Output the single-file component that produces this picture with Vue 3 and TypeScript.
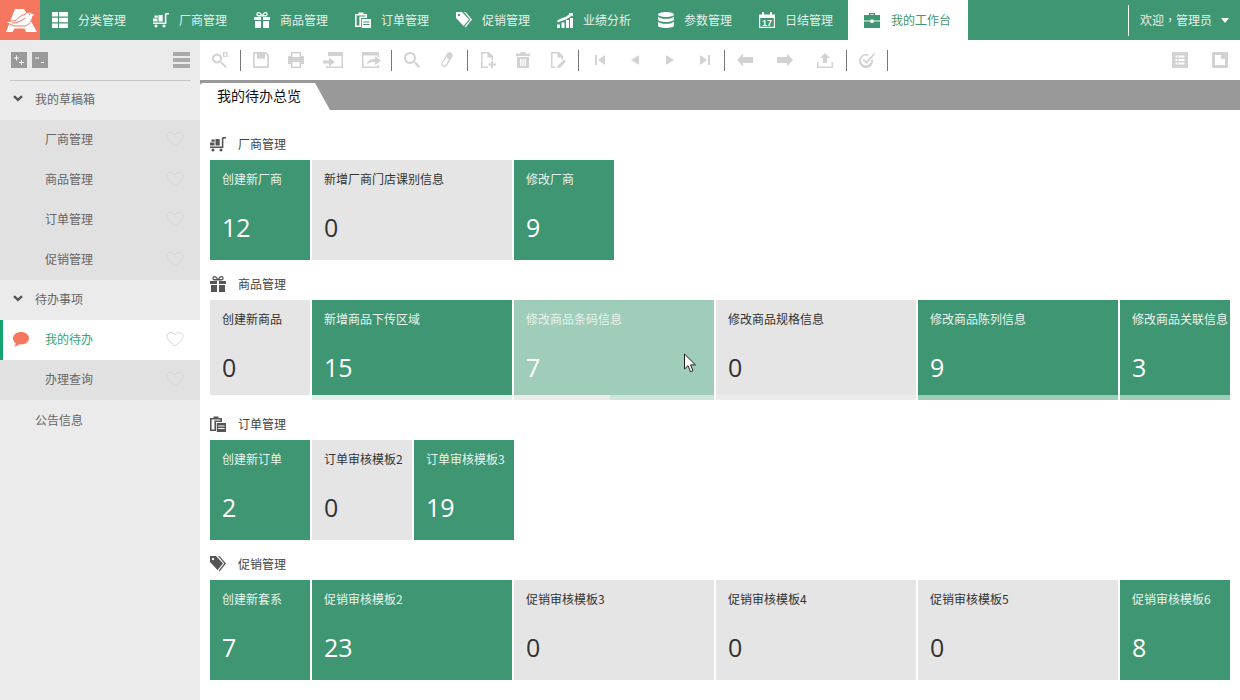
<template>
  <div class="page">
    <header class="topbar">
      <div class="logo">
        <svg width="40" height="40" viewBox="0 0 40 40">
          <path class="logo-a" d="M15 9h9l3 5 10 18H26l-1.500-3.500h-10L12.500 32H6z" />
          <path class="logo-bird" d="M5 22l11-1.500c2-2.500 5-5.500 9-6 1-2.500 5-3 7-1l4 1.500-3.500 1.500c-.5 4.500-3.500 8.500-7.500 9.500H14l-3-1.500z" />
          <circle class="logo-eye" cx="29.500" cy="14.500" r=".7" />
          <path class="logo-wing" d="M12 23c5 0 10-2 13-5" />
        </svg>
      </div>
      <nav class="nav">
        <a v-for="item in navItems" :key="item.label" class="nav-item">
          <svg class="nav-icon" viewBox="0 0 16 16"><path :d="icons[item.icon]" fill-rule="evenodd" />
            <text v-if="item.icon === 'calendar'" x="8" y="13.600" text-anchor="middle" class="cal-text">17</text>
          </svg>
          <span class="lift">{{ item.label }}</span>
        </a>
        <a class="nav-item active">
          <svg class="nav-icon" viewBox="0 0 16 16"><path :d="icons.briefcase" fill-rule="evenodd" /></svg>
          <span class="lift">我的工作台</span>
        </a>
      </nav>
      <div class="user">
        <span class="lift">欢迎<span class="comma">，</span>管理员</span>
        <i class="caret"></i>
      </div>
    </header>

    <div class="main">
      <aside class="sidebar">
        <div class="side-tools">
          <span class="square">
            <svg width="16" height="16" viewBox="0 0 16 16"><path d="M3 6h5M5.500 3.500v5M8 10.500h5M10.500 8v5" /></svg>
          </span>
          <span class="square">
            <svg width="16" height="16" viewBox="0 0 16 16"><path d="M3 6h4M9 10.500h3" /></svg>
          </span>
          <span class="bars"><i></i><i></i><i></i></span>
        </div>
        <div class="side-group first">
          <svg class="chevron" width="10" height="7" viewBox="0 0 10 7"><path d="M1 1.200l4 3.600 4-3.600" /></svg>
          我的草稿箱
        </div>
        <div v-for="name in draftItems" :key="name" class="side-sub">
          <span>{{ name }}</span>
          <svg class="heart" width="18" height="16" viewBox="0 0 18 16"><path :d="heartPath" /></svg>
        </div>
        <div class="side-group">
          <svg class="chevron" width="10" height="7" viewBox="0 0 10 7"><path d="M1 1.200l4 3.600 4-3.600" /></svg>
          待办事项
        </div>
        <div class="side-sub current">
          <svg class="bubble" width="16" height="16" viewBox="0 0 16 16">
            <path d="M8 1c4.400 0 8 2.600 8 6.300s-3.600 6.200-8 6.200c-.7 0-1.400 0-2-.2C4.500 15 2.500 15.300 .8 15.400c1-.7 1.700-1.700 1.900-3.200C1 11 0 9.300 0 7.300 0 3.600 3.600 1 8 1z" />
          </svg>
          <span>我的待办</span>
          <svg class="heart" width="18" height="16" viewBox="0 0 18 16"><path :d="heartPath" /></svg>
        </div>
        <div class="side-sub">
          <span>办理查询</span>
          <svg class="heart" width="18" height="16" viewBox="0 0 18 16"><path :d="heartPath" /></svg>
        </div>
        <div class="side-group plain">公告信息</div>
      </aside>

      <section class="content">
        <div class="toolbar">
          <template v-for="(group, i) in toolGroups" :key="i">
            <div class="tool-group" :class="group.cls">
              <svg v-for="t in group.tools" :key="t" :width="t === 'import' || t === 'export' ? 20 : 16" height="16"
                :viewBox="t === 'import' || t === 'export' ? '0 0 20 16' : '0 0 16 16'">
                <path :d="tools[t]" fill-rule="evenodd" />
              </svg>
            </div>
            <span class="sep"></span>
          </template>
          <div class="tool-group wide right">
            <svg width="16" height="16" viewBox="0 0 16 16"><path :d="tools.listBox" fill-rule="evenodd" /></svg>
            <svg width="16" height="16" viewBox="0 0 16 16"><path :d="tools.docBox" fill-rule="evenodd" /></svg>
          </div>
        </div>

        <div class="tabstrip">
          <div class="tab">我的待办总览</div>
        </div>

        <div class="board">
          <div v-for="sec in sections" :key="sec.title" class="section">
            <h4 class="sec-title">
              <svg width="16" height="16" viewBox="0 0 16 16"><path :d="icons[sec.icon]" fill-rule="evenodd" /></svg>
              <span class="lift">{{ sec.title }}</span>
            </h4>
            <div class="cards">
              <div v-for="card in sec.cards" :key="card.title" class="card" :style="{ width: card.w + 'px' }">
                <div class="card-body" :class="card.tone">
                  <div class="card-title">{{ card.title }}</div>
                  <div class="card-num">{{ card.num }}</div>
                  <svg v-if="card.cursor" class="cursor" width="14" height="22" viewBox="0 0 14 22">
                    <path d="M1.500 1v15l3.500-3.300 2.500 6 2.500-1-2.500-5.800h5z" />
                  </svg>
                </div>
                <div v-if="card.strip" class="strip" :style="{ background: card.strip }">
                  <div class="strip-fill" :style="{ width: (card.fillW || 0) + '%', background: card.fill }"></div>
                </div>
                <div v-else-if="sec.striped" class="strip none"></div>
              </div>
            </div>
          </div>
        </div>
      </section>
    </div>
  </div>
</template>

<script setup lang="ts">
interface Card {
  title: string
  num: number
  w: number
  tone: 'green' | 'gray' | 'faded'
  strip?: string
  fill?: string
  fillW?: number
  cursor?: boolean
}

interface Section {
  title: string
  icon: string
  striped?: boolean
  cards: Card[]
}

const icons: Record<string, string> = {
  grid: 'M0 0h6v4.500H0zM7 0h9v4.500H7zM0 5.750h6v4.500H0zM7 5.750h9v4.500H7zM0 11.500h6V16H0zM7 11.500h9V16H7z',
  cart: 'M0 6.500h4.500v3H0zM1.500 3.500h3.200v2.200H1.500zM5.500 3h4.200v6.500H5.500zM0 10.500h11.800V3c0-1.400.8-2 2-2H16v1.500h-1.400c-.8 0-1.200.3-1.200 1.100V12H0zM3 12.600a1.500 1.500 0 1 1-.01 0zM11 12.600a1.500 1.500 0 1 1-.01 0z',
  gift: 'M0 5h7v3H0zM9 5h7v3H9zM1 9h6v7H1zM9 9h6v7H9zM4.500 0a2.200 2.200 0 0 0 0 4.400h7a2.200 2.200 0 0 0 0-4.400C10 0 8.900 1 8 3 7.100 1 6 0 4.500 0zM4.500 1.300a.9.9 0 0 0 0 1.800h2C6 2 5.300 1.300 4.500 1.300zM11.500 1.300a.9.9 0 0 1 0 1.800h-2c.5-1.100 1.200-1.800 2-1.800z',
  clipboard: 'M0 2h3.500V.5h5V2H12v4H6v9H0zM1.600 3.600v9.800H4.400V4.400H10.400V3.600zM6.800 7H16v9H6.800zM8.200 9.600v1h6.400v-1zM8.200 12v1h6.400v-1z',
  tags: 'M0 0h6l7 7.500-5.500 6.500L0 6zM3 1.800a1.200 1.200 0 1 0 .01 0zM8 0h1.500L16 7.500 9.500 15.500l-.8-.9 5.600-7z',
  chart: 'M0 12.500h3V16H0zM4.500 10.500h3V16h-3zM9 8h3v8H9zM13 6h3v10h-3zM0 9c3-3 7-3 10-5l2.500-2-.8-1H16v3.500l-1-1-3.500 2.500C8.500 8.500 4 8.500 1 10.500z',
  database: 'M0 2.500C0 1 3.500 0 8 0s8 1 8 2.500S12.500 5 8 5 0 4 0 2.500zM0 4.500c1 1.400 4 2.300 8 2.300s7-.9 8-2.300v3C16 9 12.500 10 8 10S0 9 0 7.500zM0 9.500c1 1.400 4 2.300 8 2.300s7-.9 8-2.300v4C16 15 12.500 16 8 16s-8-1-8-2.500z',
  calendar: 'M0 2.500h3V0h2v2.500h6V0h2v2.500h3V16H0zM1.200 6v8.800h13.600V6z',
  briefcase: 'M5 3V1h6v2h5v5.500H9.500v-1h-3v1H0V3zM6.300 2.200V3h3.400v-.8zM0 9.500h6.500V11h3V9.500H16V16H0z',
}

const tools: Record<string, string> = {
  keySearch: 'M5 1.500a5 5 0 1 0 .01 0zM5 3.500a3 3 0 1 1-.01 0zM8.900 9.300L15 14.500 13.500 16 7.800 10.500zM11 0h4.500v5H11zM12.200 1.200v2.600h2.100V1.200z',
  save: 'M1 0h12l3 3v12a1 1 0 0 1-1 1H1a1 1 0 0 1-1-1V1a1 1 0 0 1 1-1zM1.700 1.700v12.600h12.600V3.700l-2-2h-.3v5H4v-5z',
  print: 'M3 0h10v4h2a1 1 0 0 1 1 1v7h-3v4H3v-4H0V5a1 1 0 0 1 1-1h2zM4.500 1.500V5h7V1.500zM4.500 10v4.500h7V10z',
  import: 'M5 0h15v16H3v-2h1.500v.5h14V4H5zM0 8.500h6V5.500l6 4.500-6 4.500v-3H0z',
  export: 'M0 0h17v5h-1.500V3.500h-14v11h14V13H17v3H0zM5 12.500c0-3.500 3-5.500 8-5.500V4l6 4.500-6 4.500v-3c-4 0-6 .5-8 2.500z',
  search: 'M6 0a6 6 0 1 1-.01 0zM6 2a4 4 0 1 0 .01 0zM10 11l1.500-1.500 4.500 4.500-1.500 2z',
  eraser: 'M8 1.500c1.500-1.500 3.500-1.500 4.700-.5 1.300 1.200 1.300 3 .3 4.500L8 13.500c-1.200 1.700-3 2-4.300 1.200C2.300 13.800 2 12 3 10.300zM7.500 5L4 10.500c-.7 1.200-.5 2.300.3 2.800.9.5 1.900.2 2.700-1l3-4.800z',
  fileAdd: 'M1 0h8l4 4v4h-1.500V5.500H7.500V1.500h-5v13H8V16H1zM11 9h2v2.500h3v2h-3V16h-2v-2.500H8.500v-2H11z',
  trash: 'M5.500 0h5v1.500H15V4H1V1.500h4.500zM2 5h12v11H2zM5 7v7h1.400V7zM7.300 7v7h1.400V7zM9.600 7v7H11V7z',
  fileEdit: 'M1 0h8l4 4v3l-1.500 1.500V5.500H7.500V1.500h-5v13H6L5 16H1zM14 7.500l2 2-6 6.500H7.500V14z',
  first: 'M3 3h2v10H3zM13 3v10L6 8z',
  prev: 'M12 3v10L4 8z',
  next: 'M4 3l8 5-8 5z',
  last: 'M3 3l7 5-7 5zM11 3h2v10h-2z',
  left: 'M0 8l6-6.500V5h10v6H6v3.500z',
  right: 'M16 8l-6 6.500V11H0V5h10V1.500z',
  upload: 'M8 1l5 5h-3v5H6V6H3zM0 10h1.500v4.500h13V10H16v6H0z',
  check: 'M7 2c1.200 0 2.200.3 3 .8L9 4c-.6-.3-1.300-.5-2-.5a5 5 0 1 0 5 5l1.500-1.500c.3.500.5 1 .5 1.500A7 7 0 1 1 7 2zM15 1l1 1.300L7.500 12 3.500 8l1-1.200 3 2.500z',
  listBox: 'M1 0h14a1 1 0 0 1 1 1v14a1 1 0 0 1-1 1H1a1 1 0 0 1-1-1V1a1 1 0 0 1 1-1zM3.500 3.500v2h2v-2zM6.500 3.500v2h6v-2zM3.500 7v2h2V7zM6.500 7v2h6V7zM3.500 10.500v2h2v-2zM6.500 10.500v2h6v-2z',
  docBox: 'M1 0h14a1 1 0 0 1 1 1v14a1 1 0 0 1-1 1H1a1 1 0 0 1-1-1V1a1 1 0 0 1 1-1zM3 3v10h10V7H9V3z',
}

const heartPath = 'M9 14.800C4.500 11.500 1 8.600 1 5.300 1 3 2.700 1.400 4.800 1.400c1.700 0 3.200 1 4.200 2.600 1-1.600 2.500-2.600 4.200-2.600C15.300 1.400 17 3 17 5.300c0 3.300-3.500 6.200-8 9.500z'

const navItems = [
  { label: '分类管理', icon: 'grid' },
  { label: '厂商管理', icon: 'cart' },
  { label: '商品管理', icon: 'gift' },
  { label: '订单管理', icon: 'clipboard' },
  { label: '促销管理', icon: 'tags' },
  { label: '业绩分析', icon: 'chart' },
  { label: '参数管理', icon: 'database' },
  { label: '日结管理', icon: 'calendar' },
]

const draftItems = ['厂商管理', '商品管理', '订单管理', '促销管理']

const toolGroups = [
  { tools: ['keySearch'], cls: '' },
  { tools: ['save', 'print', 'import', 'export'], cls: 'short' },
  { tools: ['search', 'eraser'], cls: '' },
  { tools: ['fileAdd', 'trash', 'fileEdit'], cls: '' },
  { tools: ['first', 'prev', 'next', 'last'], cls: 'nudge' },
  { tools: ['left', 'right', 'upload'], cls: 'wide' },
  { tools: ['check'], cls: '' },
]

const LIGHT = '#e0f0ea'
const PALE = '#ebebeb'
const MID = '#9fccb8'

const sections: Section[] = [
  {
    title: '厂商管理',
    icon: 'cart',
    cards: [
      { title: '创建新厂商', num: 12, w: 100, tone: 'green' },
      { title: '新增厂商门店课别信息', num: 0, w: 200, tone: 'gray' },
      { title: '修改厂商', num: 9, w: 100, tone: 'green' },
    ],
  },
  {
    title: '商品管理',
    icon: 'gift',
    striped: true,
    cards: [
      { title: '创建新商品', num: 0, w: 100, tone: 'gray' },
      { title: '新增商品下传区域', num: 15, w: 200, tone: 'green', strip: LIGHT },
      { title: '修改商品条码信息', num: 7, w: 200, tone: 'faded', strip: '#cde5da', fill: PALE, fillW: 48, cursor: true },
      { title: '修改商品规格信息', num: 0, w: 200, tone: 'gray', strip: PALE },
      { title: '修改商品陈列信息', num: 9, w: 200, tone: 'green', strip: MID },
      { title: '修改商品关联信息', num: 3, w: 220, tone: 'green', strip: MID },
    ],
  },
  {
    title: '订单管理',
    icon: 'clipboard',
    cards: [
      { title: '创建新订单', num: 2, w: 100, tone: 'green' },
      { title: '订单审核模板2', num: 0, w: 100, tone: 'gray' },
      { title: '订单审核模板3', num: 19, w: 100, tone: 'green' },
    ],
  },
  {
    title: '促销管理',
    icon: 'tags',
    cards: [
      { title: '创建新套系', num: 7, w: 100, tone: 'green' },
      { title: '促销审核模板2', num: 23, w: 200, tone: 'green' },
      { title: '促销审核模板3', num: 0, w: 200, tone: 'gray' },
      { title: '促销审核模板4', num: 0, w: 200, tone: 'gray' },
      { title: '促销审核模板5', num: 0, w: 200, tone: 'gray' },
      { title: '促销审核模板6', num: 8, w: 220, tone: 'green' },
    ],
  },
]
</script>

<style>
html,
body {
  margin: 0;
  background: #fff;
  overflow: hidden;
}
</style>

<style scoped>
.page {
  width: 1240px;
  height: 700px;
  display: flex;
  flex-direction: column;
  overflow: hidden;
  font-family: "Noto Sans CJK SC", "Liberation Sans", sans-serif;
  font-size: 12px;
}

.topbar {
  height: 40px;
  flex: none;
  display: flex;
  background: #3f9672;
  color: #e4f1ec;
}

.logo {
  width: 40px;
  height: 40px;
  background: #f5775f;
}
.logo-a {
  fill: #fff;
}
.logo-bird {
  fill: #fff;
  stroke: #f5775f;
  stroke-width: 1;
}
.logo-eye {
  fill: #f5775f;
}
.logo-wing {
  fill: none;
  stroke: #f5775f;
  stroke-width: 1;
}

.nav {
  display: flex;
}
.nav-item {
  width: 101px;
  display: flex;
  align-items: center;
  gap: 10px;
  padding-left: 12px;
  box-sizing: border-box;
  white-space: nowrap;
}
.lift {
  padding-bottom: 2px;
}
.nav-icon {
  width: 16px;
  height: 16px;
  fill: #fff;
  flex: none;
}
.cal-text {
  font-family: "Liberation Sans", sans-serif;
  font-size: 9px;
  font-weight: 700;
}
.nav-item.active {
  width: 120px;
  padding-left: 16px;
  gap: 11px;
  background: #fff;
  color: #3f9672;
}
.nav-item.active .nav-icon {
  fill: #3f9672;
}

.user {
  margin-left: auto;
  margin-top: 5px;
  height: 31px;
  width: 112px;
  box-sizing: border-box;
  border-left: 1px solid #fff;
  padding-left: 11px;
  display: flex;
  align-items: center;
}
.comma {
  font-family: "Noto Sans CJK TC", sans-serif;
}
.caret {
  margin-left: 9px;
  width: 0;
  height: 0;
  border: 4px solid transparent;
  border-top: 5px solid #fff;
  border-bottom: 0;
}

.main {
  flex: 1;
  display: flex;
  min-height: 0;
}

.sidebar {
  width: 200px;
  flex: none;
  background: #ebebeb;
  color: #666;
}
.side-tools {
  height: 41px;
  margin: 0 9px 0 10px;
  padding: 12px 1px 0 1px;
  box-sizing: border-box;
  border-bottom: 1px solid #c8c8c8;
  display: flex;
  gap: 5px;
}
.square {
  width: 16px;
  height: 16px;
  background: #999;
}
.square svg {
  display: block;
  fill: none;
  stroke: #fff;
  stroke-width: 1;
}
.bars {
  margin-left: auto;
  width: 17px;
  height: 16px;
  display: flex;
  flex-direction: column;
  justify-content: space-between;
}
.bars i {
  height: 4px;
  background: #aaa;
}

.side-group {
  height: 40px;
  box-sizing: border-box;
  display: flex;
  align-items: center;
  padding-left: 13px;
  padding-bottom: 3px;
}
.side-group.first {
  height: 39px;
  padding-bottom: 4px;
}
.side-group.plain {
  padding-left: 35px;
  padding-bottom: 1px;
}
.chevron {
  margin-right: 12px;
  fill: none;
  stroke: #555;
  stroke-width: 2.4;
}
.side-sub {
  height: 40px;
  box-sizing: border-box;
  display: flex;
  align-items: center;
  padding-left: 45px;
  padding-right: 16px;
  padding-bottom: 3px;
  background: #e1e1e1;
  position: relative;
}
.heart {
  margin-left: auto;
  fill: none;
  stroke: #d6d6d6;
  stroke-width: 1;
}
.side-sub.current {
  background: #fff;
  color: #2fa57a;
  border-left: 3px solid #12a36f;
  padding-left: 10px;
}
.bubble {
  fill: #f5775f;
  margin-right: 16px;
}

.content {
  flex: 1;
  min-width: 0;
  display: flex;
  flex-direction: column;
}

.toolbar {
  height: 40px;
  flex: none;
  display: flex;
  align-items: center;
}
.tool-group {
  display: flex;
  gap: 19px;
  padding: 0 12px;
}
.tool-group svg {
  display: block;
  fill: #d2d2d2;
}
.tool-group.short {
  padding-right: 9px;
}
.tool-group.nudge {
  padding: 0 11px 0 13px;
}
.tool-group.wide {
  gap: 24px;
  padding-right: 13px;
}
.tool-group.right {
  margin-left: auto;
  padding-right: 12px;
}
.sep {
  width: 1px;
  height: 21px;
  background: #777;
}

.tabstrip {
  height: 30px;
  flex: none;
  box-sizing: border-box;
  padding-top: 3px;
  background: #999;
}
.tab {
  width: 130px;
  height: 27px;
  box-sizing: border-box;
  padding-left: 17px;
  line-height: 25px;
  font-size: 14px;
  color: #111;
  background: #fff;
  border-top-left-radius: 3px;
  clip-path: polygon(0 0, 115px 0, 100% 100%, 0 100%);
}

.board {
  padding: 10px 10px 0;
  overflow: hidden;
}
.section {
  height: 140px;
}
.sec-title {
  margin: 0;
  height: 40px;
  display: flex;
  align-items: center;
  gap: 12px;
  font-size: 12px;
  font-weight: 400;
  color: #444;
  padding-top: 8px;
  box-sizing: border-box;
}
.sec-title svg {
  fill: #555;
  flex: none;
}
.cards {
  display: flex;
  gap: 2px;
  height: 100px;
  overflow: hidden;
}
.card {
  flex: none;
  display: flex;
  flex-direction: column;
}
.card-body {
  flex: 1;
  min-height: 0;
  padding: 10px 12px 0;
  box-sizing: border-box;
  position: relative;
}
.card-body.green {
  background: #3f9672;
  color: #e8f4ef;
}
.card-body.gray {
  background: #e5e5e5;
  color: #333;
}
.card-body.faded {
  background: #a0cdb9;
  color: #e6f3ed;
}
.card-title {
  line-height: 18px;
  white-space: nowrap;
}
.card-num {
  margin-top: 22px;
  font-family: "Open Sans", "Liberation Sans", sans-serif;
  font-size: 25px;
  line-height: 34px;
}
.card-body.green .card-num,
.card-body.faded .card-num {
  color: #fff;
}
.cursor {
  position: absolute;
  left: 169px;
  top: 53px;
  fill: #fff;
  stroke: #222;
  stroke-width: 1;
}
.strip {
  height: 5px;
  flex: none;
}
.strip.none {
  background: #fff;
}
.strip-fill {
  height: 100%;
}
</style>
